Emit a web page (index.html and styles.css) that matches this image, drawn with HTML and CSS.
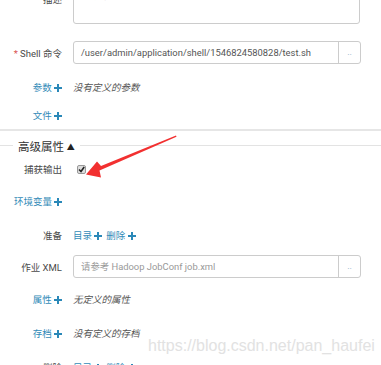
FILE: index.html
```html
<!DOCTYPE html>
<html>
<head>
<meta charset="utf-8">
<link rel="stylesheet" href="styles.css">
</head>
<body>
<div class="page">
  <div class="form">
    <div class="row row-desc">
      <div class="label label-top">描述</div>
      <div class="textarea"><span class="ph">系统描述</span></div>
    </div>
    <div class="row row-shell">
      <div class="label"><span class="req">*</span> Shell 命令</div>
      <div class="input-group">
        <div class="input">/user/admin/application/shell/1546824580828/test.sh</div>
        <div class="btn">..</div>
      </div>
    </div>
    <div class="row row-params">
      <div class="label link">参数 <span class="plus"></span></div>
      <div class="empty">没有定义的参数</div>
    </div>
    <div class="row row-files">
      <div class="label link">文件 <span class="plus"></span></div>
    </div>
  </div>
  <div class="sep"></div>
  <div class="legend">
    <div class="legend-line short"></div>
    <span class="legend-text">高级属性 <span class="tri">▲</span></span>
    <div class="legend-line"></div>
  </div>
  <div class="form">
    <div class="row row-capture">
      <div class="label">捕获输出</div>
      <div class="checkbox"><svg width="7" height="7" viewBox="0 0 7 7"><path d="M1 3.5 L3 5.5 L6.2 1" fill="none" stroke="#222" stroke-width="1.6"/></svg></div>
    </div>
    <div class="row row-env">
      <div class="label label-wide link">环境变量 <span class="plus"></span></div>
    </div>
    <div class="row row-prep">
      <div class="label">准备</div>
      <div class="links"><span class="link">目录 <span class="plus"></span></span><span class="link">删除 <span class="plus"></span></span></div>
    </div>
    <div class="row row-xml">
      <div class="label">作业 XML</div>
      <div class="input-group">
        <div class="input ph-input">请参考 Hadoop JobConf job.xml</div>
        <div class="btn">..</div>
      </div>
    </div>
    <div class="row row-props">
      <div class="label link">属性 <span class="plus"></span></div>
      <div class="empty">无定义的属性</div>
    </div>
    <div class="row row-archive">
      <div class="label link">存档 <span class="plus"></span></div>
      <div class="empty">没有定义的存档</div>
    </div>
    <div class="row row-last">
      <div class="label">删除</div>
      <div class="links"><span class="link">目录 <span class="plus"></span></span><span class="link">删除 <span class="plus"></span></span></div>
    </div>
  </div>
  <svg class="arrow" width="381" height="365" viewBox="0 0 381 365">
    <path d="M176 135.5 L101 166 L97 161.5 L86 174.5 L101 177.5 L99.5 170.5 L176.5 136.8 Z" fill="#f23030"/>
  </svg>
  <div class="watermark">https://blog.csdn.net/pan_haufei</div>
</div>
</body>
</html>
```
FILE: styles.css
```css
html, body {
  margin: 0;
  padding: 0;
  background: #fff;
}
body {
  font-family: Roboto, "Noto Sans CJK SC", sans-serif;
  font-size: 9.5px;
  color: #333;
  width: 381px;
  height: 365px;
  overflow: hidden;
}
.page {
  position: relative;
  height: 365px;
  overflow: hidden;
}
.form {
  display: flex;
  flex-direction: column;
}
.row {
  display: flex;
  align-items: center;
  gap: 11px;
  min-height: 22px;
}
.label {
  width: 62px;
  flex: none;
  text-align: right;
  color: #4a4a4a;
  white-space: nowrap;
}
.label.link {
  color: #338bb8;
}
.label-top {
  align-self: flex-start;
  padding-top: 10px;
}
.req {
  color: #d9534f;
}
.link {
  color: #338bb8;
}
.plus {
  display: inline-block;
  width: 8px;
  height: 8px;
  vertical-align: -1px;
  background:
    linear-gradient(#2a88b8, #2a88b8) center / 8px 2.4px no-repeat,
    linear-gradient(#2a88b8, #2a88b8) center / 2.4px 8px no-repeat;
}
.row-desc {
  margin-top: -18px;
  align-items: flex-start;
}
.textarea {
  width: 287px;
  height: 42px;
  border: 1px solid #ccc;
  border-radius: 3px;
  box-sizing: border-box;
  padding: 5px 8px;
}
.ph {
  color: #bbb;
}
.row-shell {
  margin-top: 17px;
}
.input-group {
  display: flex;
  width: 288px;
  height: 23px;
  border: 1px solid #ccc;
  border-radius: 3px;
  box-sizing: border-box;
}
.input {
  flex: 1;
  padding: 0 7px;
  line-height: 21px;
  color: #555;
  font-size: 9.4px;
  white-space: nowrap;
  overflow: hidden;
}
.ph-input {
  color: #999;
}
.btn {
  width: 21px;
  border-left: 1px solid #ccc;
  color: #8aafc8;
  text-align: center;
  line-height: 21px;
  font-size: 9px;
}
.row-params {
  margin-top: 12px;
}
.empty {
  font-style: italic;
  color: #555;
}
.row-files {
  margin-top: 6px;
}
.sep {
  margin-top: 3px;
  border-top: 2px solid #e6e6e6;
}
.legend {
  display: flex;
  align-items: center;
  margin-top: 6px;
  height: 18px;
}
.legend-line {
  flex: 1;
  border-top: 1px solid #e3e3e3;
  margin-top: -1px;
}
.legend-line.short {
  flex: none;
  width: 13px;
}
.legend-text {
  font-size: 11.5px;
  color: #333;
  padding: 0 5px;
}
.tri {
  font-size: 8px;
  color: #222;
  vertical-align: 1px;
}
.row-capture {
  margin-top: 3px;
}
.checkbox {
  width: 7px;
  height: 7px;
  border: 1px solid #999;
  border-radius: 2px;
  background: #ddd;
  margin-left: 4px;
  display: flex;
}
.row-env {
  margin-top: 10px;
}
.label-wide {
  width: auto;
  padding-left: 14px;
}
.row-prep {
  margin-top: 12px;
}
.links {
  display: flex;
  gap: 4px;
}
.row-xml {
  margin-top: 9px;
}
.row-props {
  margin-top: 10px;
}
.row-archive {
  margin-top: 12px;
}
.row-last {
  margin-top: 12px;
}
.arrow {
  position: absolute;
  left: 0;
  top: 0;
  pointer-events: none;
}
.watermark {
  position: absolute;
  left: 148px;
  top: 337px;
  font-family: "Liberation Sans", Arial, sans-serif;
  font-size: 16px;
  color: #e2e2e2;
  white-space: nowrap;
}
```
